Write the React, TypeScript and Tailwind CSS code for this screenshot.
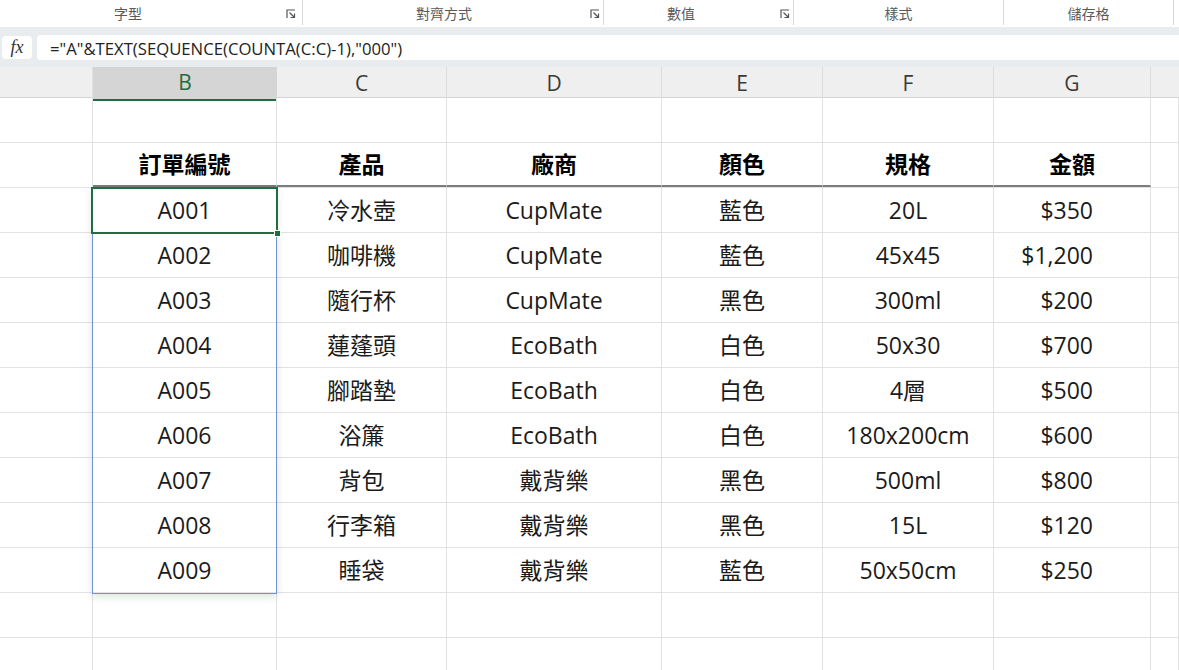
import React from "react";

const GRID = "grid grid-cols-[93px_184px_170px_215px_161px_171px_157px_1fr]";

const RIBBON_GROUPS = [
  { label: "字型", w: "w-[303px]", labelW: "w-[256px]", launcher: "ml-[30px]" },
  { label: "對齊方式", w: "w-[301px]", labelW: "w-[282px]", launcher: "ml-[5px]" },
  { label: "數值", w: "w-[190px]", labelW: "w-[154px]", launcher: "ml-[22px]" },
  { label: "樣式", w: "w-[210px]", labelW: "w-[210px]", launcher: "" },
  { label: "儲存格", w: "w-[170px]", labelW: "w-[170px]", launcher: "" },
];

const HEADERS = ["訂單編號", "產品", "廠商", "顏色", "規格", "金額"];

const ROWS: string[][] = [
  ["A001", "冷水壺", "CupMate", "藍色", "20L", "$350"],
  ["A002", "咖啡機", "CupMate", "藍色", "45x45", "$1,200"],
  ["A003", "隨行杯", "CupMate", "黑色", "300ml", "$200"],
  ["A004", "蓮蓬頭", "EcoBath", "白色", "50x30", "$700"],
  ["A005", "腳踏墊", "EcoBath", "白色", "4層", "$500"],
  ["A006", "浴簾", "EcoBath", "白色", "180x200cm", "$600"],
  ["A007", "背包", "戴背樂", "黑色", "500ml", "$800"],
  ["A008", "行李箱", "戴背樂", "黑色", "15L", "$120"],
  ["A009", "睡袋", "戴背樂", "藍色", "50x50cm", "$250"],
];

function Launcher() {
  return (
    <svg width="10" height="10" viewBox="0 0 10 10" fill="none" stroke="#555" strokeWidth="1.2">
      <path d="M1 9V1h8" />
      <path d="M3.5 3.5L8.5 8.5" />
      <path d="M8.5 4.5v4h-4" />
    </svg>
  );
}

function Cell({ children, className = "" }: { children?: React.ReactNode; className?: string }) {
  return (
    <div className={`flex h-full items-center justify-center border-r border-[#e2e2e2] ${className}`}>
      {children}
    </div>
  );
}

export default function App() {
  return (
    <div className="h-[670px] w-[1179px] overflow-hidden bg-white font-['Open_Sans','Noto_Sans_CJK_TC',sans-serif] text-[#1b1b1b]">
      {/* ribbon group labels */}
      <div className="flex h-[27px] items-start bg-white">
        {RIBBON_GROUPS.map((g) => (
          <div key={g.label} className={`flex h-[25px] items-center border-r border-[#d8d8d8] pt-[2px] ${g.w}`}>
            <span className={`text-center text-[14px] text-[#5a5a5a] ${g.labelW}`}>{g.label}</span>
            {g.launcher && (
              <span className={`flex ${g.launcher}`}>
                <Launcher />
              </span>
            )}
          </div>
        ))}
      </div>

      {/* formula bar */}
      <div className="bg-[#e9ecef] pt-[8px] pb-[7px]">
        <div className="flex h-[25px] items-center">
          <div className="ml-[2px] flex h-[23px] w-[30px] items-center justify-center rounded bg-white">
            <span className="font-['Liberation_Serif',serif] text-[18px] italic text-[#333]">fx</span>
          </div>
          <div className="ml-[5px] flex h-[25px] flex-1 items-center rounded-l bg-white pt-[2px] pl-[13px] text-[16.7px] text-[#222]">
            ="A"&amp;TEXT(SEQUENCE(COUNTA(C:C)-1),"000")
          </div>
        </div>
      </div>

      {/* column letters */}
      <div className={`${GRID} h-[31px] border-b border-[#d4d4d4] bg-[#efefef] text-[21px] text-[#3a3a3a]`}>
        <div className="h-full border-r border-[#e0e0e0]" />
        <div className="flex h-full items-center justify-center border-b-2 border-[#1e6e42] bg-[#d5d5d5] text-[#1e6e42]">
          B
        </div>
        {["C", "D", "E", "F", "G"].map((c) => (
          <div key={c} className="flex h-full items-center justify-center border-r border-[#dcdcdc]">
            {c}
          </div>
        ))}
        <div className="h-full" />
      </div>

      {/* sheet body */}
      <div className="relative text-[23px]">
        <div className={`${GRID} h-[45px] border-b border-[#e2e2e2]`}>
          {Array.from({ length: 8 }).map((_, i) => (
            <Cell key={i} />
          ))}
        </div>

        <div className={`${GRID} h-[45px] border-b border-[#e2e2e2]`}>
          <Cell />
          {HEADERS.map((h) => (
            <Cell key={h} className="border-b-2 border-b-[#7c7c7c] font-bold text-black">
              {h}
            </Cell>
          ))}
          <Cell />
        </div>

        {ROWS.map((r) => (
          <div key={r[0]} className={`${GRID} h-[45px] border-b border-[#e2e2e2]`}>
            <Cell />
            {r.slice(0, 5).map((v, i) => (
              <Cell key={i}>{v}</Cell>
            ))}
            <Cell className="justify-end pr-[57px]">{r[5]}</Cell>
            <Cell />
          </div>
        ))}

        {[0, 1].map((i) => (
          <div key={i} className={`${GRID} h-[45px] border-b border-[#e2e2e2]`}>
            {Array.from({ length: 8 }).map((_, j) => (
              <Cell key={j} />
            ))}
          </div>
        ))}

        {/* spill range outline */}
        <div className="pointer-events-none absolute top-[89px] left-[92px] h-[407px] w-[185px] border border-[#6f93d3] shadow-[0_3px_8px_rgba(0,0,0,0.12)]" />
        {/* active cell */}
        <div className="pointer-events-none absolute top-[89px] left-[91px] h-[47px] w-[187px] border-2 border-[#1e6e42]" />
        {/* fill handle */}
        <div className="pointer-events-none absolute top-[132px] left-[274px] h-[7px] w-[7px] border border-white bg-[#1e6e42]" />
      </div>
    </div>
  );
}
